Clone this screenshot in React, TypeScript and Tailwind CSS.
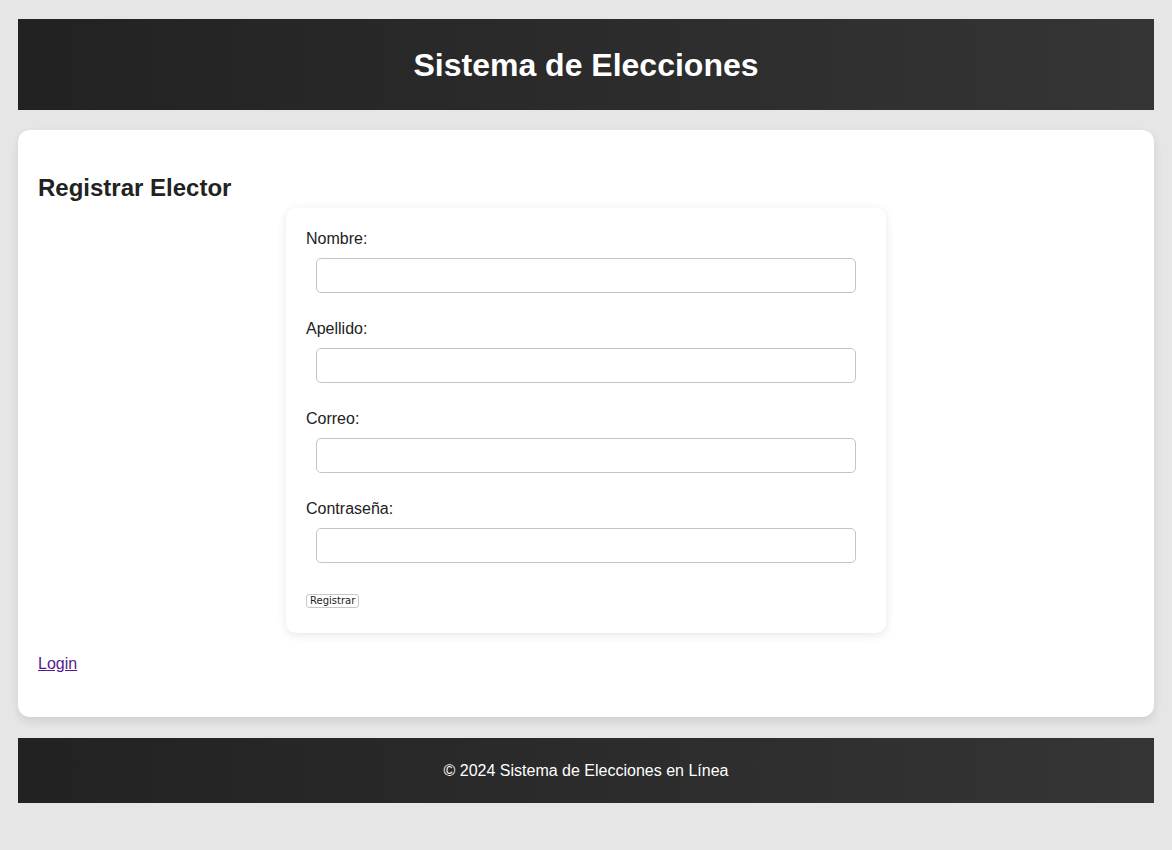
export default function App() {
  const fields = [
    { label: 'Nombre:', type: 'text' },
    { label: 'Apellido:', type: 'text' },
    { label: 'Correo:', type: 'email' },
    { label: 'Contraseña:', type: 'password' },
  ]

  return (
    <div className="min-h-[850px] bg-[#e6e6e6] px-[18px] pt-[19px] pb-[47px] font-['Liberation_Sans',Arial,sans-serif] text-[#222]">
      {/* Header */}
      <header className="flex h-[91px] items-center justify-center bg-gradient-to-r from-[#222222] to-[#353535]">
        <h1 className="text-[32px] font-bold leading-none text-white">Sistema de Elecciones</h1>
      </header>

      {/* Main card */}
      <main className="mt-[20px] rounded-[12px] bg-white px-[20px] pt-[44px] pb-[44px] shadow-[0_4px_10px_rgba(0,0,0,0.1)]">
        <h2 className="text-[24px] font-bold leading-[28px] text-[#222]">Registrar Elector</h2>

        <form className="mx-auto mt-[6px] w-[600px] rounded-[10px] bg-white px-[20px] pt-[20px] pb-[25px] shadow-[0_2px_10px_rgba(0,0,0,0.1)]">
          {fields.map((f) => (
            <div key={f.label}>
              <label className="block text-[16px] leading-[22px] text-[#222]">{f.label}</label>
              <input
                type={f.type}
                className="mx-[10px] mt-[8px] mb-[25px] block h-[35px] w-[540px] rounded-[5px] border border-[#c4c4c4] bg-white px-2 outline-none"
              />
            </div>
          ))}
          <div className="flex pt-[6px]">
            <button
              type="button"
              className="h-[14px] rounded-[3px] border border-[#c8c8c8] bg-white px-[3px] font-['DejaVu_Sans',sans-serif] text-[10px] leading-[12px] text-[#222]"
            >
              Registrar
            </button>
          </div>
        </form>

        <a href="#" className="mt-[22px] block w-fit text-[16px] leading-[18px] text-[#551a8b] underline">
          Login
        </a>
      </main>

      {/* Footer */}
      <footer className="mt-[21px] flex h-[65px] items-center justify-center bg-gradient-to-r from-[#222222] to-[#353535]">
        <p className="text-[16px] text-white">© 2024 Sistema de Elecciones en Línea</p>
      </footer>
    </div>
  )
}
